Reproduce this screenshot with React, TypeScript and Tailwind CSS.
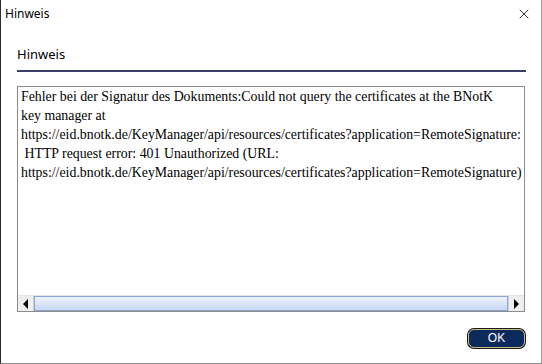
import { X } from 'lucide-react'

const lines = [
  'Fehler bei der Signatur des Dokuments:Could not query the certificates at the BNotK',
  'key manager at',
  'https://eid.bnotk.de/KeyManager/api/resources/certificates?application=RemoteSignature:',
  ' HTTP request error: 401 Unauthorized (URL:',
  'https://eid.bnotk.de/KeyManager/api/resources/certificates?application=RemoteSignature)',
]

const App = () => {
  return (
    <div className="w-[542px] h-[364px] bg-white border-l border-l-[#2b2b2b] border-r border-r-[#9a9a9a] border-b border-b-[#8a8a8a] flex flex-col font-['Segoe_UI','Noto_Sans','Liberation_Sans',sans-serif] text-black overflow-hidden">
      {/* title bar */}
      <div className="h-[27px] flex items-center justify-between pl-[4px] pr-[9px]">
        <span className="text-[12px]">Hinweis</span>
        <X className="w-[16px] h-[16px]" strokeWidth={1.2} />
      </div>

      <div className="flex-1 flex flex-col px-[16px]">
        <div className="mt-[17px] text-[13px] leading-[20px]">Hinweis</div>
        <div className="mt-[6px] h-[2px] bg-[#3d3d6b] mr-[-1px]" />

        {/* message area */}
        <div className="mt-[14px] h-[226px] border border-[#8c8c8c] flex flex-col">
          <div className="flex-1 pl-[3px] pt-0 font-['Liberation_Serif','Times_New_Roman',serif] text-[13.85px] leading-[19px] whitespace-pre overflow-hidden">
            {lines.map((l, i) => (
              <div key={i}>{l}</div>
            ))}
          </div>
          <div className="h-[16px] flex border-t border-[#e3e3e3]">
            <div className="w-[16px] bg-[#eeeeee] flex items-center justify-center border-r border-[#cfcfcf]">
              <div className="w-0 h-0 border-y-[5px] border-y-transparent border-r-[5px] border-r-black" />
            </div>
            <div className="flex-1 bg-gradient-to-b from-[#eef3fb] to-[#c7d7ee] border border-[#8aa5d2]" />
            <div className="w-[16px] bg-[#eeeeee] flex items-center justify-center border-l border-[#cfcfcf]">
              <div className="w-0 h-0 border-y-[5px] border-y-transparent border-l-[5px] border-l-black" />
            </div>
          </div>
        </div>

        <div className="mt-[17px] flex justify-end">
          <button
            type="button"
            className="w-[57px] h-[19px] rounded-[6px] bg-[#0d2a5c] border border-[#c9bf7a] text-white text-[12px] leading-[17px] font-['Liberation_Sans',sans-serif] shadow-[0_0_0_1px_#1a1a1a]"
          >
            OK
          </button>
        </div>
      </div>
    </div>
  )
}

export default App
